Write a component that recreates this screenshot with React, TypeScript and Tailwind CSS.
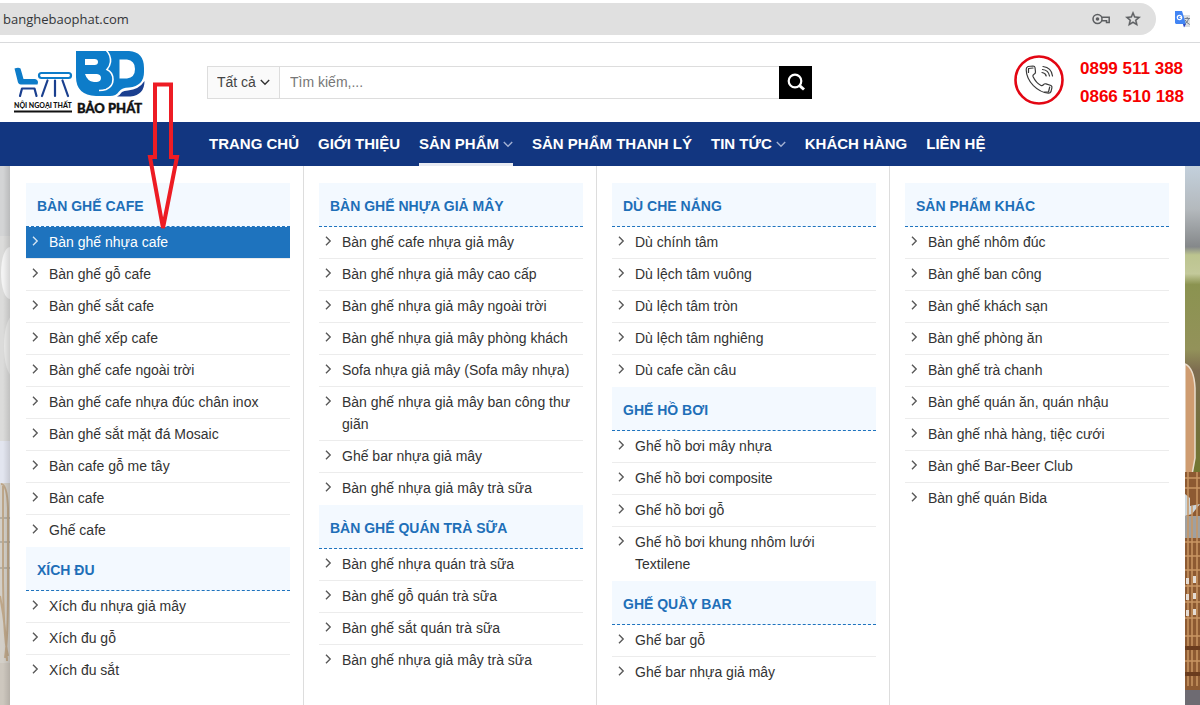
import React from "react";

type Group = { title: string; items: string[] };

const columns: Group[][] = [
  [
    {
      title: "BÀN GHẾ CAFE",
      items: [
        "Bàn ghế nhựa cafe",
        "Bàn ghế gỗ cafe",
        "Bàn ghế sắt cafe",
        "Bàn ghế xếp cafe",
        "Bàn ghế cafe ngoài trời",
        "Bàn ghế cafe nhựa đúc chân inox",
        "Bàn ghế sắt mặt đá Mosaic",
        "Bàn cafe gỗ me tây",
        "Bàn cafe",
        "Ghế cafe",
      ],
    },
    { title: "XÍCH ĐU", items: ["Xích đu nhựa giả mây", "Xích đu gỗ", "Xích đu sắt"] },
  ],
  [
    {
      title: "BÀN GHẾ NHỰA GIẢ MÂY",
      items: [
        "Bàn ghế cafe nhựa giả mây",
        "Bàn ghế nhựa giả mây cao cấp",
        "Bàn ghế nhựa giả mây ngoài trời",
        "Bàn ghế nhựa giả mây phòng khách",
        "Sofa nhựa giả mây (Sofa mây nhựa)",
        "Bàn ghế nhựa giả mây ban công thư giãn",
        "Ghế bar nhựa giả mây",
        "Bàn ghế nhựa giả mây trà sữa",
      ],
    },
    {
      title: "BÀN GHẾ QUÁN TRÀ SỮA",
      items: [
        "Bàn ghế nhựa quán trà sữa",
        "Bàn ghế gỗ quán trà sữa",
        "Bàn ghế sắt quán trà sữa",
        "Bàn ghế nhựa giả mây trà sữa",
      ],
    },
  ],
  [
    {
      title: "DÙ CHE NẮNG",
      items: ["Dù chính tâm", "Dù lệch tâm vuông", "Dù lệch tâm tròn", "Dù lệch tâm nghiêng", "Dù cafe cần câu"],
    },
    {
      title: "GHẾ HỒ BƠI",
      items: ["Ghế hồ bơi mây nhựa", "Ghế hồ bơi composite", "Ghế hồ bơi gỗ", "Ghế hồ bơi khung nhôm lưới Textilene"],
    },
    { title: "GHẾ QUẦY BAR", items: ["Ghế bar gỗ", "Ghế bar nhựa giả mây"] },
  ],
  [
    {
      title: "SẢN PHẨM KHÁC",
      items: [
        "Bàn ghế nhôm đúc",
        "Bàn ghế ban công",
        "Bàn ghế khách sạn",
        "Bàn ghế phòng ăn",
        "Bàn ghế trà chanh",
        "Bàn ghế quán ăn, quán nhậu",
        "Bàn ghế nhà hàng, tiệc cưới",
        "Bàn ghế Bar-Beer Club",
        "Bàn ghế quán Bida",
      ],
    },
  ],
];

const navItems = [
  { label: "TRANG CHỦ", menu: false, active: false },
  { label: "GIỚI THIỆU", menu: false, active: false },
  { label: "SẢN PHẨM", menu: true, active: true },
  { label: "SẢN PHẨM THANH LÝ", menu: false, active: false },
  { label: "TIN TỨC", menu: true, active: false },
  { label: "KHÁCH HÀNG", menu: false, active: false },
  { label: "LIÊN HỆ", menu: false, active: false },
];

const ACTIVE_ITEM = "Bàn ghế nhựa cafe";

function Logo() {
  return (
    <svg viewBox="0 0 140 72" className="h-[72px] w-[140px]" role="img" aria-label="Nội ngoại thất Bảo Phát">
      <g fill="none" strokeLinecap="round" strokeLinejoin="round">
        <path d="M6.500 22.500q4-1.500 6 0 1.500 5 3 10.500H27q3 .5 3 3.500l-.5 2H13q-3 0-3.500-4z" fill="#0d7cc9" />
        <path d="M12 50l2-7.500h12.500l2 7.500" stroke="#1a3f8f" strokeWidth="2.200" />
        <rect x="31" y="27" width="32" height="5" rx="2.500" stroke="#0d7cc9" strokeWidth="2.200" />
        <path d="M39.500 34.500 34 50M47 34.500V50M54.500 34.500 60 50" stroke="#1a3f8f" strokeWidth="2.200" />
      </g>
      <path d="M68 5h53q15 1 15 17v4q0 14-15 15.500-7 0-10 4-3 4.500-9 4.500H88q-20-1-20-19z" fill="#0d7cc9" />
      <path
        d="M77 13h9.500q3.500 0 3.500 3t-3.500 3H77zM77 28h12q4 .5 4 4t-4 4h-3q-7-1-9-8zM111.500 13.500h7.500q8 1 8 9.500t-8 9.500h-7.500z"
        fill="#fff"
      />
      <path d="M98 4q5 5 4.500 12-.5 4-3.500 7.500 6 3 6 10 0 7-7 10-3 1-7 1" fill="none" stroke="#fff" strokeWidth="1.600" />
      <path d="M109 50.500q3-1.500 5-4.500 2-1.500 6-1.500 11-1 16.500-9.500 0 14-14 15.500z" fill="#1a3f8f" />
      <text x="6" y="62" fontSize="7" fontWeight="900" fill="#111" fontFamily="Lato, sans-serif">
        NỘI NGOẠI THẤT
      </text>
      <path d="M6 65.500h58" stroke="#111" strokeWidth="2" />
      <text x="69" y="67" fontSize="13" fontWeight="900" fill="#111" stroke="#111" strokeWidth=".4" fontFamily="Lato, sans-serif">
        BẢO PHÁT
      </text>
    </svg>
  );
}

function Chevron({ className }: { className: string }) {
  return (
    <svg viewBox="0 0 10 10" className={className} fill="none" stroke="currentColor" strokeWidth="1.400" aria-hidden="true">
      <path d="M.8 3 5 7.200 9.200 3" />
    </svg>
  );
}

function BrowserBar() {
  return (
    <div className="flex h-[43px] items-start border-b border-[#d9dadc] bg-white pt-[3px]">
      <div className="flex h-8 flex-1 items-center rounded-r-full bg-[#e0e0e0] pl-[3px] pr-3.5 text-[#5c5e61]">
        <span className="flex-1 pt-0.5 font-['Open_Sans',sans-serif] text-[13px] text-[#333538]">banghebaophat.com</span>
        <svg viewBox="0 0 18 12" className="mr-3.5 h-3 w-[18px]" fill="none" stroke="currentColor" strokeWidth="1.500" aria-hidden="true">
          <circle cx="5.500" cy="6" r="4.500" />
          <circle cx="5.500" cy="6" r="1.800" fill="currentColor" stroke="none" />
          <path d="M9.500 4.300h7.700v5.200h-2.700V7.700H9.600" />
        </svg>
        <svg viewBox="0 0 24 24" className="h-[18px] w-[18px]" fill="currentColor" stroke="currentColor" strokeWidth=".5" aria-hidden="true">
          <path d="m22 9.240-7.190-.62L12 2 9.190 8.630 2 9.240l5.460 4.730L5.820 21 12 17.270 18.180 21l-1.630-7.030zM12 15.400l-3.760 2.270 1-4.280-3.320-2.880 4.380-.38L12 6.100l1.710 4.040 4.380.38-3.320 2.880 1 4.280z" />
        </svg>
      </div>
      <svg viewBox="0 0 16 17" className="mr-[9px] ml-[19px] mt-2 h-[17px] w-4" aria-hidden="true">
        <path d="M5 4h10v12H9z" fill="#dcdfe3" />
        <path d="M0 0h7l4 13H1l-1-1z" fill="#4285f4" />
        <path d="m8 13h3l-2 3.500z" fill="#2442c7" />
        <circle cx="4.500" cy="6.500" r="2.200" fill="none" stroke="#fff" strokeWidth="1.200" />
        <path d="M4.500 6.500h2.400" stroke="#fff" />
        <path d="M9.500 7.500H15M12.200 6v1.500m1.500 0q-1 4-4 5.500m.5-4q1.500 3 4.500 4.500" fill="none" stroke="#77808c" />
      </svg>
    </div>
  );
}

function PhoneBadge() {
  return (
    <svg viewBox="0 0 50 50" className="size-[50px] shrink-0" fill="none" aria-hidden="true">
      <circle cx="25" cy="25" r="23.500" fill="#fff" stroke="#e30613" strokeWidth="2.600" />
      <g stroke="#3a3a3a" strokeWidth="1.200" strokeLinecap="round" strokeLinejoin="round">
        <path d="M14 11.500l5-.5q1.800 0 2 1.500l.5 4.500q0 1.500-1.500 2.300-1.500.8-1 2.200 3 6.500 8 9 1.500.5 2.500-.8 1-1.300 2.500-.8l5 1.600q1.300.7.9 2.300l-1 4q-.5 1.500-2.500 1.400-8-.5-15-7.500-7-7.500-7.200-16-.2-2.500 1.800-3.200z" />
        <path d="M14.500 13.500l4.500-.5M14.500 13.500v4M35.700 32l-1.200 5M34.500 37h-4" />
        <path d="M29 11.500q8.500 1 9.500 9.500M28.500 14.500q6 .7 7 6.500M28 17.500q3.500.3 4.200 3.500" />
      </g>
    </svg>
  );
}

function Header() {
  return (
    <header className="flex h-[79px] items-center bg-white pr-4 pl-2">
      <a href="#home" className="-mt-0.5 shrink-0">
        <Logo />
      </a>
      <form className="ml-[59px] flex h-[33px] w-[605px] shrink-0 text-sm" onSubmit={(e) => e.preventDefault()}>
        <div className="relative flex w-[73px] border border-[#dddddd] bg-[#fafafa]">
          <select aria-label="Danh mục" className="w-full appearance-none bg-transparent pb-0.5 pl-[9px] text-[#444] outline-none">
            <option>Tất cả</option>
          </select>
          <Chevron className="pointer-events-none absolute top-2.5 right-[9px] size-2.5 text-[#333]" />
        </div>
        <input
          type="search"
          aria-label="Tìm kiếm"
          placeholder="Tìm kiếm,..."
          className="min-w-0 flex-1 border-y border-[#dddddd] pb-0.5 pl-2.5 outline-none placeholder:text-[#777]"
        />
        <button type="submit" aria-label="Tìm kiếm" className="flex w-[33px] items-center justify-center bg-black pb-0.5">
          <svg viewBox="0 0 18 18" className="size-[18px]" fill="none" stroke="#fff" strokeWidth="2.200" aria-hidden="true">
            <circle cx="8" cy="8" r="6.300" />
            <path d="m12.300 12.300 4.700 4.200" strokeWidth="3" />
          </svg>
        </button>
      </form>
      <div className="ml-auto flex items-start gap-4">
        <PhoneBadge />
        <div className="flex flex-col text-[17px] leading-7 font-bold text-[#f60000]">
          <a href="tel:0899511388">0899 511 388</a>
          <a href="tel:0866510188">0866 510 188</a>
        </div>
      </div>
    </header>
  );
}

function Nav() {
  return (
    <nav className="flex h-11 gap-[19px] bg-[#123680] pl-[209px] text-[15px] font-bold whitespace-nowrap text-white">
      {navItems.map((n) => (
        <a
          key={n.label}
          href="#menu"
          className={n.active ? "flex items-center gap-1 border-y-3 border-t-transparent border-b-[#e8ebf2]" : "flex items-center gap-1"}
        >
          {n.label}
          {n.menu && <Chevron className="size-2.5 text-[#a3b1d2]" />}
        </a>
      ))}
    </nav>
  );
}

function MenuGroup({ group }: { group: Group }) {
  return (
    <section>
      <h2 className="flex h-11 items-center border-b border-dashed border-[#1e73be] bg-[#f3f9ff] px-[11px] pt-0.5 text-sm font-bold text-[#1e6fb8]">
        {group.title}
      </h2>
      <ul>
        {group.items.map((t) => (
          <li key={t} className="border-b border-[#ececec] last:border-transparent">
            <a
              href="#item"
              className={
                t === ACTIVE_ITEM
                  ? "flex bg-[#1e73be] pt-1 pr-2.5 pb-[5px] pl-1 text-white"
                  : "flex pt-1 pr-2.5 pb-[5px] pl-1 text-[#333]"
              }
            >
              <Chevron className="mt-[5px] mr-[9px] size-2.5 shrink-0 -rotate-90 opacity-80" />
              <span>{t}</span>
            </a>
          </li>
        ))}
      </ul>
    </section>
  );
}

function LeftPhoto() {
  return (
    <svg viewBox="0 0 10 539" preserveAspectRatio="none" className="w-2.5 shrink-0" aria-hidden="true">
      <defs>
        <linearGradient id="edge" x1="0" y1="0" x2="1" y2="0">
          <stop offset=".3" stopColor="#000" stopOpacity="0" />
          <stop offset="1" stopColor="#000" stopOpacity=".12" />
        </linearGradient>
      </defs>
      <rect width="10" height="539" fill="#dbdbda" />
      <rect width="10" height="70" fill="#d3d4d5" />
      <ellipse cx="10" cy="107" rx="9" ry="26" fill="#f3f3f3" />
      <ellipse cx="13" cy="180" rx="9" ry="30" fill="#ebebea" />
      <rect y="275" width="10" height="42" fill="#e2e5ef" />
      <rect y="317" width="10" height="222" fill="#d3cfc8" />
      <path d="M0 352h10M0 376h10M0 402h10" stroke="#b3afa6" strokeWidth="2" />
      <path d="M1 318q6 0 7 24v80q0 50-3 70M3 320v80q0 70 5 90M0 430q6 30 7 65" fill="none" stroke="#bda689" strokeWidth="2" />
      <rect y="497" width="10" height="42" fill="#cdc7be" />
      <rect width="10" height="539" fill="url(#edge)" />
    </svg>
  );
}

function RightPhoto() {
  return (
    <svg viewBox="0 0 15 539" preserveAspectRatio="none" className="w-[15px] shrink-0" aria-hidden="true">
      <defs>
        <linearGradient id="field" x1="0" y1="0" x2="0" y2="1">
          <stop offset="0" stopColor="#c3d0dc" />
          <stop offset=".08" stopColor="#b4b9bd" />
          <stop offset=".15" stopColor="#85888a" />
          <stop offset=".165" stopColor="#bcc48f" />
          <stop offset=".2" stopColor="#c3c99a" />
          <stop offset=".22" stopColor="#8b9350" />
          <stop offset=".34" stopColor="#93925a" />
          <stop offset=".38" stopColor="#7d6c50" />
          <stop offset=".5" stopColor="#74703a" />
          <stop offset=".6" stopColor="#707a2c" />
        </linearGradient>
      </defs>
      <rect width="15" height="539" fill="url(#field)" />
      <path d="M0 198q9 4 10 24v70l-5 28H0z" fill="#cf9c70" stroke="#e9dccb" strokeWidth="1.500" />
      <rect y="306" width="15" height="233" fill="#8d5a32" />
      <path d="M0 328l5 4v8l10-2-8 10-7 2z" fill="#ccd5da" />
      <rect y="350" width="15" height="22" fill="#9fa0a0" />
      <path
        d="M0 312h15M0 322h15M0 376h15M0 390h15M0 404h15M0 420h15M0 436h15M0 452h15M0 470h15M0 495h15M3 306v214M7 340v180M12 306v214"
        stroke="#c99663"
        strokeWidth="1.500"
      />
      <path d="M1 412h3v6H1zM8 410h3v7H8zM1 428h3v6H1zM8 427h3v6H8zM1 444h3v6H1zM8 443h3v6H8z" fill="#e5dcd3" />
      <path d="M0 482h15M0 508h15" stroke="#6a3c1e" strokeWidth="4" />
      <rect y="524" width="15" height="15" fill="#6e6b72" />
    </svg>
  );
}

export default function App() {
  return (
    <div className="relative flex min-h-screen flex-col bg-white font-['Liberation_Sans',Arial,sans-serif]">
      <BrowserBar />
      <Header />
      <Nav />
      <main className="flex flex-1">
        <LeftPhoto />
        <div className="grid flex-1 grid-cols-4 rounded-tl bg-white pr-0.5 pl-px text-sm leading-[22px]">
          {columns.map((groups) => (
            <div key={groups[0].title} className="border-r border-[#dddddd] pt-[17px] pr-[13px] pl-[15px] last:border-transparent">
              {groups.map((g) => (
                <MenuGroup key={g.title} group={g} />
              ))}
            </div>
          ))}
        </div>
        <RightPhoto />
      </main>
      <svg viewBox="0 0 34 154" className="pointer-events-none absolute top-20 left-[146px] h-[154px] w-[34px]" aria-hidden="true">
        <path d="M9 4.500h16V77h6L17 148 4 77h5z" fill="none" stroke="#ed1c24" strokeWidth="4" />
      </svg>
    </div>
  );
}
